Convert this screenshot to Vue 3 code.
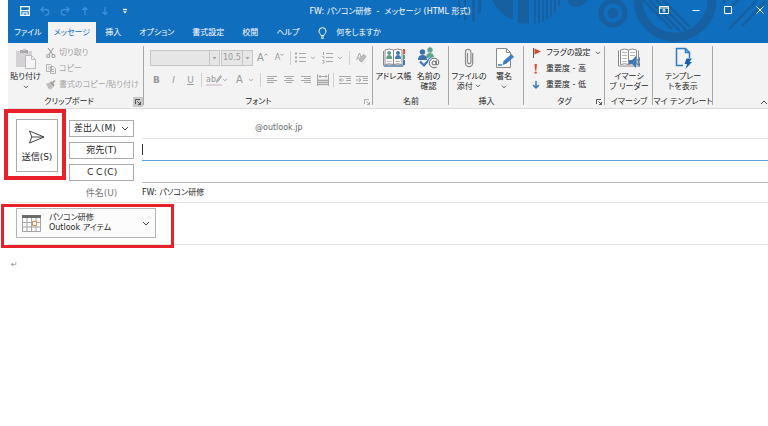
<script setup>
import { ref } from 'vue'

const tabs = ['ファイル', 'メッセージ', '挿入', 'オプション', '書式設定', '校閲', 'ヘルプ']
const active = ref('メッセージ')
const to = ref('')
const cc = ref('')
const subject = ref('FW: パソコン研修')
const body = ref('↵')
</script>

<template>
  <div class="window" lang="ja">
    <header class="top">
      <svg class="art" width="328" height="43" viewBox="0 0 328 43" aria-hidden="true">
        <g fill="#1660a1">
          <path d="M18 0h2v18h-2zM24 0h2v20h-2zM32 0h3v21h-3zM38 0h3v13h-3z" />
          <path d="M52 0h21v20q-12-4-21-20zM78 0h11v24q-6 0-11-1zM94 0h2v23l-2 1zM98 0h2v23l-2 0zM102 0h2v21l-2 1zM106 0h2v19l-2 1zM110 0h2v16l-2 1zM114 0h2v12l-2 2zM118 0h2v5l-2 3z" />
          <path d="M127 0h20q-3 7-10 7t-10-7z" />
          <circle cx="173" cy="13" r="5.500" />
        </g>
        <g fill="none" stroke="#1660a1">
          <circle cx="173" cy="13" r="12" stroke-width="5" />
          <circle cx="235" cy="0" r="37" stroke-width="9" />
          <path d="M203 0l29 29M209 0l31 31M216 0l30 30M223 0l27 27" stroke-width="2.500" />
          <path d="M286 12l12-12M289 29l28-29M302 26l24-25M283 3l3-3" stroke-width="2.500" />
        </g>
      </svg>

      <div class="titlebar">
        <div class="quick">
          <button aria-label="上書き保存"><svg width="10" height="10" viewBox="0 0 10 10"><path d="M.7.7h8.600v8.600H.7z" fill="none" stroke="#fff" stroke-width="1.200" /><path d="M1 4.700h8M3 9V6.800h4V9" fill="none" stroke="#fff" stroke-width="1.200" /></svg></button>
          <button aria-label="元に戻す"><svg width="10" height="10" viewBox="0 0 10 10"><path d="M3.500.8L.8 3.500l2.700 2.700M1 3.500h5a2.800 2.800 0 010 5.600H4.500" /></svg></button>
          <button aria-label="やり直し"><svg width="10" height="10" viewBox="0 0 10 10"><path d="M6.500.8l2.700 2.700-2.700 2.700M9 3.500H4a2.800 2.800 0 000 5.600h1.500" /></svg></button>
          <button aria-label="前のアイテム"><svg width="10" height="10" viewBox="0 0 10 10"><path d="M5 9V1.500M2.500 4L5 1.500 7.500 4" /></svg></button>
          <button aria-label="次のアイテム"><svg width="10" height="10" viewBox="0 0 10 10"><path d="M5 1v7.500M2.500 6L5 8.500 7.500 6" /></svg></button>
          <button aria-label="カスタマイズ"><svg width="10" height="10" viewBox="0 0 10 10"><path d="M3 3.500h4" stroke="#fff" /><path d="M3 5.200h4L5 7.400z" fill="#fff" stroke="none" /></svg></button>
        </div>
        <h1 class="title">FW: パソコン研修&nbsp; -&nbsp; メッセージ (HTML 形式)</h1>
        <div class="controls">
          <button aria-label="リボンの表示オプション"><svg width="10" height="10" viewBox="0 0 10 10"><path d="M.5 1.500h9v7h-9zM.5 3h9M5 7.500V4.300M3.500 5.700L5 4.300l1.500 1.400" /></svg></button>
          <button aria-label="最小化"><svg width="10" height="10" viewBox="0 0 10 10"><path d="M1.500 5.500h7" /></svg></button>
          <button aria-label="最大化"><svg width="10" height="10" viewBox="0 0 10 10"><path d="M1.500 1.500h7v7h-7z" /></svg></button>
          <button aria-label="閉じる"><svg width="10" height="10" viewBox="0 0 10 10"><path d="M1.500 1.500l7 7M8.500 1.500l-7 7" /></svg></button>
        </div>
      </div>

      <nav class="tabs">
        <button v-for="t in tabs" :key="t" class="tab" :class="{ active: t === active }" @click="active = t">{{ t }}</button>
        <button class="tab tell">
          <svg width="9" height="12" viewBox="0 0 9 12"><path d="M3 8.500C3 7 1 6.500 1 4.200a3.500 3.500 0 017 0C8 6.500 6 7 6 8.500zM3 10h3M3.500 11.500h2" fill="none" stroke="#fff" /></svg>
          何をしますか
        </button>
      </nav>
    </header>

    <section class="ribbon">
      <div class="group clip">
        <div class="content">
          <button class="big">
            <svg width="22" height="22" viewBox="0 0 22 22"><path d="M1 4h16v16H1z" fill="#d5d2d5" /><path d="M5 6V3h2.500a1.800 1.800 0 013.400 0H13v3z" fill="#a9a9a9" /><path d="M8 2.500h2v1H8z" fill="#eee" /><path d="M10.500 8.500h6l4 4v9h-10z" fill="#f6f4f6" stroke="#bdbabd" /><path d="M16.500 8.500v4h4" fill="none" stroke="#bdbabd" /></svg>
            <span>貼り付け</span>
            <svg class="chev" width="6" height="4" viewBox="0 0 6 4"><path d="M1 .8l2 2 2-2" /></svg>
          </button>
          <div class="list off">
            <button disabled><svg width="10" height="10" viewBox="0 0 10 10"><g fill="none" stroke="#a5a5a5" stroke-width="1.200"><path d="M2 0l5 7M7.500 0l-5 7" /><circle cx="2.200" cy="8" r="1.500" /><circle cx="7.500" cy="8" r="1.500" /></g></svg>切り取り</button>
            <button disabled><svg width="10" height="10" viewBox="0 0 10 10"><g fill="#f3f3f3" stroke="#b2b2b2"><path d="M.5.5h4l1 1v6h-5zM4.500 2.500h3l2 2v5h-5z" /><path d="M2 3h1.500M2 5h1.500M6 5.500h2M6 7.500h2" /></g></svg>コピー</button>
            <button disabled><svg width="10" height="10" viewBox="0 0 10 10"><path d="M0 4l3-1.500 4 4.500-2 2.500-1-1-1 1z" fill="#c0bdc0" /><path d="M3.500 2.500l2-1 3 3.500-1 2z" fill="#999" /><path d="M6.500 3L9 .5" stroke="#aaa" stroke-width="1.800" /></svg>書式のコピー/貼り付け</button>
          </div>
        </div>
        <footer>クリップボード<button class="launch lit" aria-label="クリップボードの詳細"><svg width="6" height="6" viewBox="0 0 6 6"><path d="M.5 5V.5H5M2.500 2.500l3 3M5.500 3v2.500H3" /></svg></button></footer>
      </div>

      <div class="group font">
        <div class="tools">
          <div class="row first">
            <span class="combo name"><select disabled aria-label="フォント"><option></option></select><svg width="5" height="3" viewBox="0 0 5 3"><path d="M.5 0h4L2.500 2.500z" /></svg></span>
            <span class="combo size"><select disabled aria-label="フォント サイズ"><option>10.5</option></select><svg width="5" height="3" viewBox="0 0 5 3"><path d="M.5 0h4L2.500 2.500z" /></svg></span>
            <button class="tool" disabled aria-label="拡大"><b class="letter">A</b><svg class="sup" width="4" height="3" viewBox="0 0 4 3"><path d="M.5 2.500L2 .8l1.500 1.700" /></svg></button>
            <button class="tool" disabled aria-label="縮小"><b class="letter low">A</b><svg class="sup" width="4" height="3" viewBox="0 0 4 3"><path d="M.5.8L2 2.500 3.500.8" /></svg></button>
            <i class="sep"></i>
            <button class="split" disabled aria-label="箇条書き"><svg width="11" height="12" viewBox="0 0 11 12"><path d="M4 1.500h7M4 5.500h7M4 9.500h7" /><path d="M0 1.500h2M0 5.500h2M0 9.500h2" stroke-width="2" /></svg><svg class="chev" width="6" height="4" viewBox="0 0 6 4"><path d="M1 .8l2 2 2-2" /></svg></button>
            <button class="split" disabled aria-label="段落番号"><svg width="11" height="12" viewBox="0 0 11 12"><path d="M4 1.500h7M4 5.500h7M4 9.500h7" /><path d="M1.500 0v3M.5 4.500h1v1.500h1M.5 8.500h1.500v2.500H.5" /></svg><svg class="chev" width="6" height="4" viewBox="0 0 6 4"><path d="M1 .8l2 2 2-2" /></svg></button>
            <i class="sep"></i>
            <button class="tool" disabled aria-label="書式のクリア"><svg width="12" height="12" viewBox="0 0 12 12"><path d="M1.500 8L4.500 1 6 5M2.500 6h3" /><path d="M4 8l4.500-5.500 2.500 2L6.500 10z" fill="#c2bfc2" stroke="#a8a8a8" /></svg></button>
          </div>
          <div class="row">
            <button class="tool face" disabled><b>B</b></button>
            <button class="tool face" disabled><em>I</em></button>
            <button class="tool face" disabled><u>U</u></button>
            <i class="sep"></i>
            <button class="split" disabled aria-label="蛍光ペンの色"><span class="mark">ab<svg width="6" height="8" viewBox="0 0 6 8"><path d="M.5 7.500L1 5 4.500.5l1 1L2.500 6z" fill="#bbb" /></svg></span><svg class="chev" width="6" height="4" viewBox="0 0 6 4"><path d="M1 .8l2 2 2-2" /></svg></button>
            <button class="split" disabled aria-label="フォントの色"><b class="letter">A</b><svg class="chev" width="6" height="4" viewBox="0 0 6 4"><path d="M1 .8l2 2 2-2" /></svg></button>
            <i class="sep"></i>
            <button class="tool" disabled aria-label="左揃え"><svg width="10" height="10" viewBox="0 0 10 10"><path d="M0 1.500h10M0 3.500h7M0 5.500h10M0 7.500h7" /></svg></button>
            <button class="tool" disabled aria-label="中央揃え"><svg width="10" height="10" viewBox="0 0 10 10"><path d="M0 1.500h10M2 3.500h6M0 5.500h10M2 7.500h6" /></svg></button>
            <button class="tool" disabled aria-label="右揃え"><svg width="10" height="10" viewBox="0 0 10 10"><path d="M0 1.500h10M3 3.500h7M0 5.500h10M3 7.500h7" /></svg></button>
            <button class="tool" disabled aria-label="均等割り付け"><svg width="12" height="12" viewBox="0 0 12 12"><path d="M1 5h10v6.500H1z" fill="#d8d8d8" stroke="none" /><path d="M.5 0v12M11.500 0v12M2 2.500h8M3.500 1L2 2.500 3.500 4M8.500 1L10 2.500 8.500 4M1 6.500h10M1 8.500h10M1 10.500h10" /></svg></button>
            <i class="sep"></i>
            <button class="tool" disabled aria-label="インデントを減らす"><svg width="12" height="10" viewBox="0 0 12 10"><path d="M0 1.500h12M7 3.500h5M7 5.500h5M0 8.500h12M0 5h5M2.500 3L.5 5l2 2" /></svg></button>
            <button class="tool" disabled aria-label="インデントを増やす"><svg width="12" height="10" viewBox="0 0 12 10"><path d="M0 1.500h12M7 3.500h5M7 5.500h5M0 8.500h12M0 5h5M3 3l2 2-2 2" /></svg></button>
          </div>
        </div>
        <footer>フォント<button class="launch dim" aria-label="フォントの詳細"><svg width="6" height="6" viewBox="0 0 6 6"><path d="M.5 5V.5H5M2.500 2.500l3 3M5.500 3v2.500H3" /></svg></button></footer>
      </div>

      <div class="group names">
        <div class="content">
          <button class="big">
            <svg width="22" height="22" viewBox="0 0 22 22"><path d="M.5 4v14.500h20V4" fill="#fff" stroke="#8a8a8a" /><path d="M1 17.500h19V20H1z" fill="#7f9dbb" /><path d="M2 3Q6 1 10.500 3v14.500Q6 16 2 17.500zM10.500 3q4.500-2 8.500 0v14.500q-4-1.500-8.500 0z" fill="#fff" stroke="#8a8a8a" /><circle cx="6.200" cy="6" r="2" fill="#5a9f86" /><path d="M3.200 12q0-4 3-4t3 4z" fill="#5a9f86" /><circle cx="15" cy="6" r="2" fill="#3f78b5" /><path d="M12 12q0-4 3-4t3 4z" fill="#3f78b5" /><path d="M4 14.500h4.500M12.500 14.500H17" stroke="#b0b0b0" /><path d="M20 2h2v5h-2z" fill="#e05a38" /><path d="M20 8h2v4h-2z" fill="#5a9f86" /><path d="M20 13h2v5h-2z" fill="#3f78b5" /></svg>
            <span>アドレス帳</span>
          </button>
          <button class="big">
            <svg width="22" height="22" viewBox="0 0 22 22"><circle cx="12" cy="3" r="2.700" fill="#5fa58b" /><path d="M8 11q0-5 4-5t4 5z" fill="#5fa58b" /><circle cx="4.500" cy="5" r="2.700" fill="#3b6fae" /><path d="M0 13q0-5 4.500-5T9 13z" fill="#3b6fae" /><path d="M2 15l4 4 7-8" fill="none" stroke="#f3f3f3" stroke-width="4" /><path d="M2 14.500l4 4 7-8" fill="none" stroke="#3b78bd" stroke-width="2.200" /><circle cx="16" cy="16" r="6" fill="#f3f3f3" /><g fill="none" stroke="#666" stroke-width="1"><circle cx="16" cy="16" r="2" /><path d="M18.300 13.500V17q.2 1.500 1.500.8 1.500-1.500.8-3.600a4.800 4.800 0 10-2 5.900" /></g></svg>
            <span>名前の<br>確認</span>
          </button>
        </div>
        <footer>名前</footer>
      </div>

      <div class="group insert">
        <div class="content">
          <button class="big">
            <svg width="22" height="22" viewBox="0 0 22 22"><path d="M9.500 6v9a1.700 1.700 0 003.400 0V5a2.700 2.700 0 00-5.400 0v11a3.600 3.600 0 007.200 0V6" fill="none" stroke="#8a8a8a" stroke-width="1.200" /></svg>
            <span>ファイルの<br>添付 <svg class="chev" width="6" height="4" viewBox="0 0 6 4"><path d="M1 .8l2 2 2-2" /></svg></span>
          </button>
          <button class="big">
            <svg width="22" height="22" viewBox="0 0 22 22"><path d="M3.500 1.500h10l4 4v15h-14z" fill="#fff" stroke="#8a8a8a" /><path d="M13.500 1.500v4h4" fill="none" stroke="#8a8a8a" /><path d="M9.500 18l1-4 8-7 2.500 3-8 7z" fill="#3f80c4" /><path d="M5 18h4" stroke="#3f80c4" stroke-width="1.500" /></svg>
            <span>署名</span>
            <svg class="chev" width="6" height="4" viewBox="0 0 6 4"><path d="M1 .8l2 2 2-2" /></svg>
          </button>
        </div>
        <footer>挿入</footer>
      </div>

      <div class="group tag">
        <div class="content">
          <div class="list">
            <button><svg width="10" height="10" viewBox="0 0 10 10"><path d="M1.500 0v10" stroke="#555" /><path d="M2.500.5L9 3.500 2.500 6.500z" fill="#d9472b" /></svg>フラグの設定 <svg class="chev" width="6" height="4" viewBox="0 0 6 4"><path d="M1 .8l2 2 2-2" /></svg></button>
            <button><svg width="10" height="10" viewBox="0 0 10 10"><path d="M2.500 0h2.400l-.5 6.500H3z" fill="#e0512f" /><circle cx="3.700" cy="8.600" r="1.200" fill="#e0512f" /></svg>重要度 - 高</button>
            <button><svg width="10" height="10" viewBox="0 0 10 10"><path d="M4 1v7M1 5l3 3 3-3" fill="none" stroke="#3878bd" stroke-width="1.500" /></svg>重要度 - 低</button>
          </div>
        </div>
        <footer>タグ<button class="launch" aria-label="タグの詳細"><svg width="6" height="6" viewBox="0 0 6 6"><path d="M.5 5V.5H5M2.500 2.500l3 3M5.500 3v2.500H3" /></svg></button></footer>
      </div>

      <div class="group reader">
        <div class="content">
          <button class="big">
            <svg width="22" height="22" viewBox="0 0 22 22"><path d="M.5 3.500v15.500h20V3.500" fill="#fff" stroke="#8a8a8a" /><path d="M2.500 3Q7 1 10.500 3v14.500Q7 16 2.500 17.500zM10.500 3q4-2 8 0v14.500q-4-1.500-8 0z" fill="#fff" stroke="#8a8a8a" /><path d="M4 5.500h5M4 8.500h5M4 11.500h5M4 14.500h5M12 5.500h5M12 8.500h5" stroke="#b5b5b5" /><path d="M11 13h3l4-4v12l-4-4h-3z" fill="#3f78b5" /><path d="M19.500 12q1.500 3 0 6M21 10q2 5 0 10" fill="none" stroke="#3f78b5" /></svg>
            <span>イマーシ<br>ブ リーダー</span>
          </button>
        </div>
        <footer>イマーシブ</footer>
      </div>

      <div class="group template">
        <div class="content">
          <button class="big">
            <svg width="22" height="22" viewBox="0 0 22 22"><path d="M11 18.500H4.500v-17h9l4 4V11M13.500 1.500v4h4" fill="none" stroke="#2b7cc4" stroke-width="1.500" /><path d="M14.500 11.500H20L17.500 15H20l-6.500 7 1.500-5h-2.500z" fill="#1763a8" /></svg>
            <span>テンプレー<br>トを表示</span>
          </button>
        </div>
        <footer>マイ テンプレート</footer>
      </div>

      <button class="collapse" aria-label="リボンを折りたたむ"><svg width="8" height="5" viewBox="0 0 8 5"><path d="M1 4l3-3 3 3" /></svg></button>
    </section>

    <form class="compose" @submit.prevent>
      <div class="sendbox callout">
        <button class="send" type="submit">
          <svg width="18" height="14" viewBox="0 0 18 14"><path d="M1.500 1l14.500 6L1.500 13l2.300-6zM3.800 7H16" fill="none" stroke="#444" /></svg>
          <span>送信(S)</span>
        </button>
      </div>
      <div class="fields">
        <div class="field">
          <button id="from" type="button" class="pick">差出人(M)<svg width="8" height="5" viewBox="0 0 8 5"><path d="M1 1l3 3 3-3" /></svg></button>
          <div class="value from">@outlook.jp</div>
        </div>
        <div class="field">
          <button id="to" type="button" class="pick">宛先(T)</button>
          <div class="value focus"><i class="caret"></i><input v-model="to" aria-labelledby="to"></div>
        </div>
        <div class="field">
          <button id="cc" type="button" class="pick wide">ＣＣ(C)</button>
          <div class="value line"><input v-model="cc" aria-labelledby="cc"></div>
        </div>
        <div class="field">
          <label for="subject">件名(U)</label>
          <div class="value"><input id="subject" v-model="subject"></div>
        </div>
      </div>
    </form>

    <section class="files">
      <div class="filebox callout">
        <button class="file">
          <svg width="19" height="17" viewBox="0 0 19 17"><path d="M.5 3v13.500h18V3M.5 7.500h18M.5 12h18M5 3v13M9.500 3v13M14 3v13" fill="none" stroke="#a5a5a5" /><path d="M0 0h19v3H0z" fill="#6b6b6b" /><path d="M10.500 6.500h4v4h-4z" fill="#fff" stroke="#e38b4f" /></svg>
          <span class="fname">パソコン研修<br>Outlook アイテム</span>
          <svg width="8" height="5" viewBox="0 0 8 5"><path d="M1 1l3 3 3-3" /></svg>
        </button>
      </div>
    </section>

    <textarea v-model="body" class="message" aria-label="本文" spellcheck="false"></textarea>
  </div>
</template>

<style>
body {
  background: #fff;
}
</style>

<style scoped>
.window {
  margin-left: 8px;
  font: 8px/10px "DejaVu Sans", "Noto Sans CJK JP", sans-serif;
  font-feature-settings: "palt";
  color: #262626;
}
.window * {
  box-sizing: border-box;
}
button,
input,
select,
textarea {
  margin: 0;
  padding: 0;
  border: 0;
  border-radius: 0;
  background: none;
  font: inherit;
  font-feature-settings: inherit;
  color: inherit;
  outline: none;
}
button {
  white-space: nowrap;
}
svg {
  flex: none;
}
.top {
  position: relative;
  background: #106ebe;
  color: #fff;
}
.art {
  position: absolute;
  top: 0;
  right: 0;
}
.titlebar {
  position: relative;
  display: grid;
  grid-template-columns: 1fr auto 1fr;
  align-items: center;
  height: 22px;
}
.quick {
  display: flex;
  padding-left: 7px;
}
.quick button {
  display: flex;
  justify-content: center;
  width: 20px;
}
.quick svg {
  fill: none;
  stroke: #3a91dc;
  stroke-width: 1.3;
}
.title {
  margin: 0;
  padding: 1px 0 0 4px;
  font-size: 8px;
  font-weight: 400;
}
.controls {
  display: flex;
  justify-content: flex-end;
  margin-bottom: 3px;
}
.controls button {
  display: flex;
  justify-content: flex-end;
  width: 32px;
  padding-right: 3px;
}
.controls svg {
  fill: none;
  stroke: #fff;
}
.tabs {
  position: relative;
  display: flex;
  height: 21px;
}
.tab {
  padding: 0 9px;
}
.tab:first-child {
  padding: 0 6px;
}
.tab.active {
  padding: 0 6px;
  background: #f3f3f3;
  color: #106ebe;
}
.tell {
  display: flex;
  align-items: center;
  gap: 9px;
  margin-left: 1px;
}
.ribbon {
  display: flex;
  height: 66px;
  padding-top: 2px;
  background: #f3f3f3;
  border-bottom: 1px solid #dcdcdc;
}
.group {
  position: relative;
  display: flex;
  flex-direction: column;
  flex: none;
}
.group::after {
  content: "";
  position: absolute;
  top: 1px;
  right: 0;
  bottom: 3px;
  width: 1px;
  background: #a8a8a8;
}
.clip { width: 136px; }
.font { width: 229px; }
.names { width: 76px; }
.insert { width: 75px; }
.tag { width: 81px; }
.reader { width: 48px; }
.template { width: 60px; }
.content {
  display: flex;
  justify-content: center;
  height: 51px;
}
.clip .content,
.tag .content {
  justify-content: flex-start;
}
.tag .content {
  padding-left: 8px;
}
.big {
  display: flex;
  flex-direction: column;
  align-items: center;
  width: 35px;
  padding-top: 2px;
}
.big > svg:first-child {
  margin-bottom: 3px;
}
.chev {
  fill: none;
  stroke: #555;
}
.big > .chev {
  margin-top: 3px;
}
.big span .chev {
  vertical-align: 1px;
}
.list button {
  display: flex;
  align-items: center;
  gap: 4px;
  height: 16px;
}
.clip .list {
  padding-left: 3px;
}
.clip .list button {
  gap: 3px;
}
.list.off {
  color: #a6a6a6;
}
footer {
  position: relative;
  height: 12px;
  line-height: 12px;
  text-align: center;
  white-space: nowrap;
}
.clip footer {
  padding-right: 14px;
}
.launch {
  position: absolute;
  right: 1px;
  top: 1px;
  display: flex;
  align-items: center;
  justify-content: center;
  width: 10px;
  height: 10px;
}
.launch svg {
  fill: none;
  stroke: #555;
}
.launch.lit {
  background: #c9c9c9;
}
.launch.dim svg {
  stroke: #aaa;
}
.tools {
  display: flex;
  flex-direction: column;
  gap: 6px;
  height: 51px;
  padding: 5px 0 0 4px;
  color: #999;
}
.row {
  display: flex;
  align-items: center;
  height: 16px;
}
.row.first {
  padding-left: 2px;
}
.combo {
  display: grid;
  grid-template-columns: 1fr 9px;
  align-items: center;
  justify-items: center;
  height: 16px;
  margin-right: 1px;
  background: linear-gradient(#c6c6c6, #c6c6c6) right 9px top / 1px 100% no-repeat #e6e6e6;
  border: 1px solid #c6c6c6;
}
.combo select {
  appearance: none;
  width: 100%;
  height: 14px;
  padding-left: 1px;
  opacity: 1;
}
.combo svg {
  fill: #a0a0a0;
}
.name { width: 70px; }
.size { width: 32px; }
.tool,
.split {
  display: flex;
  align-items: center;
  justify-content: center;
  width: 17px;
  height: 16px;
}
.face {
  font-size: 9px;
}
.split {
  justify-content: space-between;
  width: 27px;
  padding: 0 4px 0 2px;
}
.tool svg,
.split svg {
  fill: none;
  stroke: #a8a8a8;
}
.letter {
  font-size: 10px;
  font-weight: 400;
}
.letter.low {
  font-size: 8px;
}
.sup {
  margin-bottom: 8px;
}
.split .letter {
  padding-left: 3px;
}
.mark {
  display: flex;
  border-bottom: 2px solid #ddd3dd;
  line-height: 9px;
}
.sep {
  width: 1px;
  height: 14px;
  margin: 0 2px;
  background: #d0d0d0;
}
.collapse {
  display: flex;
  align-items: flex-end;
  margin-left: auto;
  padding-bottom: 3px;
}
.collapse svg,
.pick svg,
.file > svg:last-child {
  fill: none;
  stroke: #444;
}
.compose {
  display: flex;
  gap: 11px;
  padding: 8px 0 0 8px;
  border-bottom: 1px solid #e4e4e4;
}
.callout {
  position: relative;
}
.callout::after {
  content: "";
  position: absolute;
  border: 4px solid #e8202a;
  pointer-events: none;
}
.sendbox {
  width: 42px;
  padding-top: 2px;
}
.sendbox::after {
  inset: -8px -8px 22px -12px;
}
.send {
  display: flex;
  flex-direction: column;
  align-items: center;
  justify-content: center;
  gap: 8px;
  width: 42px;
  height: 53px;
  border: 1px solid #ababab;
  font-size: 9px;
}
.fields {
  flex: 1;
}
.field {
  display: grid;
  grid-template-columns: 65px 1fr;
  column-gap: 8px;
  align-items: center;
  height: 22px;
}
.field:last-child {
  height: 19px;
}
.pick {
  display: flex;
  align-items: center;
  justify-content: center;
  gap: 5px;
  height: 17px;
  border: 1px solid #ababab;
  font-size: 9px;
}
.pick.wide {
  font-feature-settings: normal;
}
label {
  text-align: center;
  font-size: 9px;
  color: #777;
}
.value {
  display: flex;
  align-items: center;
  align-self: stretch;
}
.value input {
  flex: 1;
  min-width: 0;
}
.from {
  padding-left: 113px;
  color: #666;
  border-bottom: 1px solid #e4e4e4;
}
.focus {
  border-bottom: 1px solid #5aa5de;
}
.line {
  border-bottom: 1px solid #b8b8b8;
}
.caret {
  width: 1px;
  height: 11px;
  background: #333;
}
.files {
  padding: 5px 0 6px 8px;
  border-bottom: 1px solid #e4e4e4;
}
.filebox {
  width: 140px;
}
.filebox::after {
  inset: -4px -18px -10px -15px;
  border-width: 3px;
}
.file {
  display: flex;
  align-items: center;
  width: 140px;
  height: 30px;
  padding: 0 5px;
  background: #fcfcfc;
  border: 1px solid #b4b4b4;
}
.fname {
  flex: 1;
  padding-left: 8px;
  text-align: left;
}
.message {
  display: block;
  width: 100%;
  height: 120px;
  padding: 15px 3px;
  color: #888;
  resize: none;
}
</style>
